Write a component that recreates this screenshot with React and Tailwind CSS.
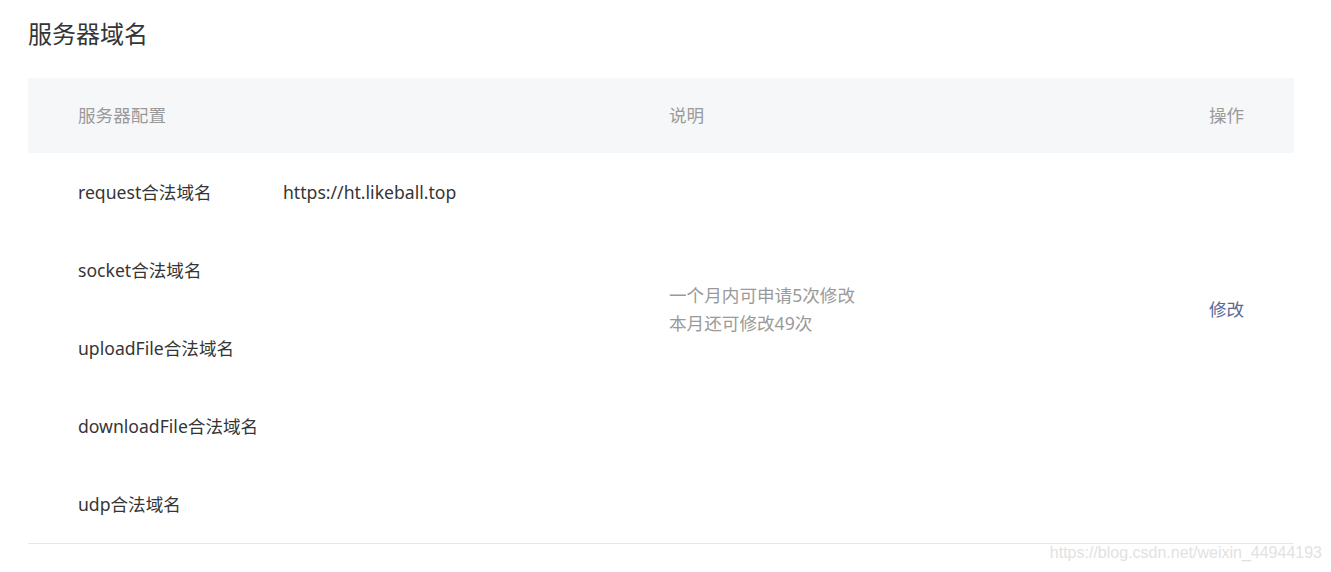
export default function App() {
  const rows = [
    { label: "request合法域名", value: "https://ht.likeball.top" },
    { label: "socket合法域名", value: "" },
    { label: "uploadFile合法域名", value: "" },
    { label: "downloadFile合法域名", value: "" },
    { label: "udp合法域名", value: "" },
  ];
  return (
    <div
      className="relative w-[1331px] h-[572px] bg-white overflow-hidden"
      style={{ fontFamily: '"Noto Sans", "Noto Sans CJK SC", sans-serif' }}
    >
      <div className="px-[28px] pt-[16px] w-[1294px]">
        <h1 className="text-[24px] leading-[36px] text-[#353535] font-normal">服务器域名</h1>
        <div className="mt-[26px] w-[1266px]">
          <div className="flex items-center h-[75px] bg-[#f6f7f9] text-[17.6px] text-[#9a9a9a]">
            <div className="w-[641px] pl-[50px]">服务器配置</div>
            <div className="w-[540px]">说明</div>
            <div>操作</div>
          </div>
          <div className="flex border-b border-[#e7e7eb]">
            <div className="w-[641px] pl-[50px]">
              {rows.map((r) => (
                <div key={r.label} className="flex items-center h-[78px] text-[17.6px] text-[#353535]">
                  <div className="w-[205px]">{r.label}</div>
                  <div>{r.value}</div>
                </div>
              ))}
            </div>
            <div className="w-[540px] pt-[128px] text-[17.6px] leading-[28px] text-[#9a9a9a]">
              <div>一个月内可申请5次修改</div>
              <div>本月还可修改49次</div>
            </div>
            <div className="pt-[142px] text-[17.6px] leading-[28px] text-[#576b95]">修改</div>
          </div>
        </div>
      </div>
      <div
        className="absolute right-[9px] top-[541px] text-[16px] leading-[24px] text-[#e2e2e2]"
        style={{ fontFamily: '"Liberation Sans Narrow", "Liberation Sans", sans-serif' }}
      >
        https://blog.csdn.net/weixin_44944193
      </div>
    </div>
  );
}
